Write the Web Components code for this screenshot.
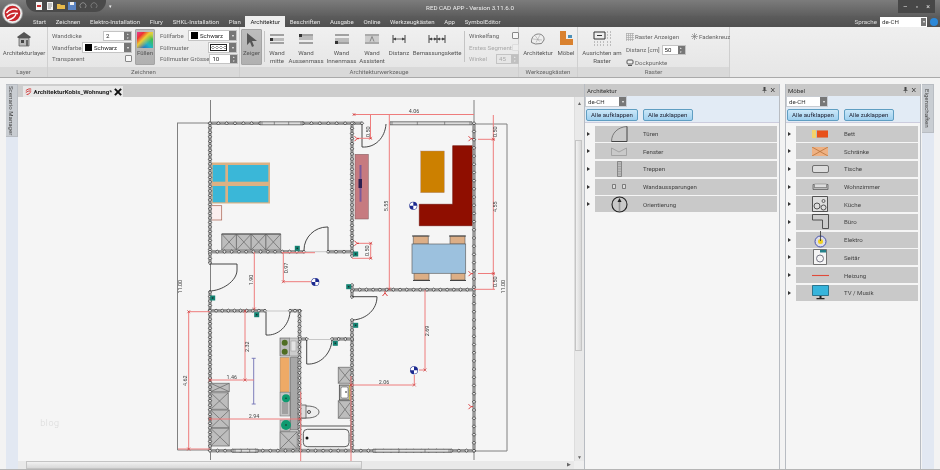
<!DOCTYPE html>
<html lang="de">
<head>
<meta charset="utf-8">
<title>RED CAD APP</title>
<style>
  html, body { margin: 0; width: 940px; height: 470px; overflow: hidden; background: #f3f3f3; }
  body { font: 6.1px Roboto, "Liberation Sans", sans-serif; color: #333; display: flex; flex-direction: column; filter: blur(.3px); }
  svg { display: block; }
</style>
</head>
<body>

<cad-titlebar title-text="RED CAD APP - Version 3.11.6.0"></cad-titlebar>
<cad-tabs active="Architektur" tabs="Start,Zeichnen,Elektro-Installation,Flury,SHKL-Installation,Plan,Architektur,Beschriften,Ausgabe,Online,Werkzeugkästen,App,SymbolEditor"></cad-tabs>

<cad-ribbon>
  <ribbon-group label="Layer" width="48">
    <ribbon-btn width="46" label="Architekturlayer">
      <svg width="16" height="16" viewBox="0 0 16 16"><path d="M1 6 8 1l7 5-1 1H2z" fill="#555"/><path d="M3 7h10v8H3z" fill="#bbb" stroke="#555" stroke-width=".7"/><path d="M5 9h3v3H5z" fill="#444"/><path d="M10 9h2v6h-2z" fill="#666"/></svg>
    </ribbon-btn>
  </ribbon-group>

  <ribbon-group label="Zeichnen" width="192">
    <form-col width="80">
      <form-line label="Wanddicke"><cad-spin value="2" width="29"></cad-spin></form-line>
      <form-line label="Wandfarbe"><cad-combo value="Schwarz" swatch="#000" width="50"></cad-combo></form-line>
      <form-line label="Transparent"><cad-check></cad-check></form-line>
    </form-col>
    <ribbon-btn width="20" label="Füllen" pressed style="margin-left:3px">
      <div style="width:16px;height:16px;background:linear-gradient(135deg,#e8379a 0%,#e33 22%,#ec3 42%,transparent 70%),linear-gradient(45deg,#2a3fc4,#1fb5c8 45%,#3fbf4a 75%,#e8e060)"></div>
    </ribbon-btn>
    <form-col width="77" style="margin-left:5px">
      <form-line label="Füllfarbe"><cad-combo value="Schwarz" swatch="#000" width="49"></cad-combo></form-line>
      <form-line label="Füllmuster"><cad-combo pattern width="29"></cad-combo></form-line>
      <form-line label="Füllmuster Grösse"><cad-spin value="10" width="29"></cad-spin></form-line>
    </form-col>
  </ribbon-group>

  <ribbon-group label="Architekturwerkzeuge" width="279">
    <ribbon-btn width="21" label="Zeiger" pressed>
      <svg width="14" height="16" viewBox="0 0 14 16"><path d="M2 1v12l3-3 2 5 2-1-2-5h5z" fill="#555"/></svg>
    </ribbon-btn>
    <ribbon-sep></ribbon-sep>
    <ribbon-btn width="24" label="Wand mitte">
      <svg width="16" height="12" viewBox="0 0 16 12"><path d="M1 2h14M1 10h14" stroke="#555" stroke-width="1.2"/><path d="M1 5h14v3H1z" fill="#bbb"/><path d="M1 5h3v3H1z" fill="#333"/></svg>
    </ribbon-btn>
    <ribbon-btn width="34" label="Wand Aussenmass">
      <svg width="16" height="12" viewBox="0 0 16 12"><path d="M1 2h14M1 10h14" stroke="#555" stroke-width="1.2"/><path d="M1 3h14v4H1z" fill="#bbb"/><path d="M1 1h3v3H1z" fill="#333"/></svg>
    </ribbon-btn>
    <ribbon-btn width="37" label="Wand Innenmass">
      <svg width="16" height="12" viewBox="0 0 16 12"><path d="M1 2h14M1 10h14" stroke="#555" stroke-width="1.2"/><path d="M1 5h14v4H1z" fill="#bbb"/><path d="M1 8h3v3H1z" fill="#333"/></svg>
    </ribbon-btn>
    <ribbon-btn width="24" label="Wand Assistent">
      <svg width="16" height="12" viewBox="0 0 16 12"><path d="M1 2h14M1 10h14" stroke="#666" stroke-width="1.2"/><path d="M1 3h14v6H1z" fill="#ccc"/><path d="M6 8.5 8 3.500l2 5" fill="none" stroke="#777" stroke-width=".8"/></svg>
    </ribbon-btn>
    <ribbon-btn width="30" label="Distanz">
      <svg width="16" height="12" viewBox="0 0 16 12"><path d="M2 2v8M14 2v8" stroke="#444"/><path d="M2 6h12" stroke="#444" stroke-width=".8"/><path d="M2 6l3-1.500v3zM14 6l-3-1.500v3z" fill="#444"/></svg>
    </ribbon-btn>
    <ribbon-btn width="46" label="Bemassungskette">
      <svg width="18" height="12" viewBox="0 0 18 12"><path d="M1 2v8M9 2v8M17 2v8" stroke="#444"/><path d="M1 6h16" stroke="#444" stroke-width=".8"/><path d="M1 6l3-1.500v3zM9 6l-3-1.500v3zM9 6l3-1.500v3zM17 6l-3-1.500v3z" fill="#444"/></svg>
    </ribbon-btn>
    <ribbon-sep style="margin-left:4px"></ribbon-sep>
    <form-col width="50" style="margin-left:4px">
      <form-line label="Winkelfang"><cad-check></cad-check></form-line>
      <form-line label="Erstes Segment" disabled><cad-check disabled></cad-check></form-line>
      <form-line label="Winkel" disabled><cad-spin value="45" width="23" disabled></cad-spin></form-line>
    </form-col>
  </ribbon-group>

  <ribbon-group label="Werkzeugkästen" width="59">
    <ribbon-btn width="36" label="Architektur">
      <svg width="16" height="12" viewBox="0 0 16 12"><path d="M1.500 9.500C1 5 4 1 8.500 1c3.500 0 6 2.500 5.500 6l-2.500 3.500-6 .5z" fill="#eee" stroke="#666" stroke-width=".8"/><path d="M5 2.500l4.500 6M10 2 6 9.500M3 6l9 1" stroke="#999" stroke-width=".5"/></svg>
    </ribbon-btn>
    <ribbon-btn width="20" label="Möbel">
      <svg width="15" height="15" viewBox="0 0 15 15"><path d="M1 0h6v8h7v6H1z" fill="#d9812f"/><path d="M9 4h4v3H9z" fill="#4a8fb8"/></svg>
    </ribbon-btn>
  </ribbon-group>

  <ribbon-group label="Raster" width="152">
    <ribbon-btn width="46" label="Ausrichten am Raster">
      <svg width="18" height="15" viewBox="0 0 18 15"><path d="M1 1h11v7H1z" fill="#eee" stroke="#333"/><path d="M4 4.500h5" stroke="#333"/><path d="M14 1h.8M17 1h.8M14 4h.8M17 4h.8M14 7h.8M17 7h.8M1 11h.8M4 11h.8M7 11h.8M10 11h.8M14 11h.8M17 11h.8M1 14h.8M4 14h.8M7 14h.8M10 14h.8M14 14h.8M17 14h.8" stroke="#777"/></svg>
    </ribbon-btn>
    <raster-opts></raster-opts>
  </ribbon-group>
</cad-ribbon>

<cad-workspace>
  <side-rail slot="left" label="Scenario Manager" tab-height="53"></side-rail>

  <cad-document slot="doc" name="ArchitekturKobis_Wohnung*">
    <floor-plan></floor-plan>
  </cad-document>

  <dock-panel slot="panels" label="Architektur" width="196" gutter="10">
    <panel-row label="Türen"><svg width="17" height="16" viewBox="0 0 17 16"><path d="M.5 15.500C.5 7 7 1 16 .5" fill="none" stroke="#666" stroke-width=".8"/><path d="M.5 15.500H16V.5" fill="none" stroke="#444" stroke-width="1"/></svg></panel-row>
    <panel-row label="Fenster"><svg width="16" height="9" viewBox="0 0 16 9"><path d="M.5 8.500h15M.5 8.500V1L8 5l7.500-4v7.500" fill="none" stroke="#999" stroke-width=".8"/></svg></panel-row>
    <panel-row label="Treppen"><svg width="5" height="16" viewBox="0 0 5 16"><path d="M.5.500h4v15h-4z" fill="#bbb" stroke="#777" stroke-width=".8"/><path d="M.5 3h4M.5 5.500h4M.5 8h4M.5 10.500h4M.5 13h4" stroke="#888" stroke-width=".5"/></svg></panel-row>
    <panel-row label="Wandaussparungen"><svg width="14" height="5" viewBox="0 0 14 5"><path d="M.5.500h3v4h-3zM10.500.500h3v4h-3z" fill="#ddd" stroke="#666" stroke-width=".8"/></svg></panel-row>
    <panel-row label="Orientierung"><svg width="17" height="17" viewBox="0 0 17 17"><circle cx="8.500" cy="8.500" r="7.500" fill="none" stroke="#222" stroke-width="1.100"/><path d="M8.500 2l2 4h-4z" fill="#222"/><path d="M7.700 6h1.600v9H7.700z" fill="#999"/></svg></panel-row>
  </dock-panel>

  <dock-panel slot="panels" label="Möbel" width="136" gutter="10">
    <panel-row label="Bett"><svg width="16" height="8" viewBox="0 0 16 8"><path d="M0 0h16v8H0z" fill="#bbb"/><path d="M0 0h4v8H0z" fill="#f3d36c"/><path d="M5 .500h11v7H5z" fill="#e8501a"/></svg></panel-row>
    <panel-row label="Schränke"><svg width="16" height="9" viewBox="0 0 16 9"><path d="M0 0h16v9H0z" fill="#eeb183"/><path d="M0 0l16 9M16 0 0 9" stroke="#b06a30" stroke-width=".7"/></svg></panel-row>
    <panel-row label="Tische"><svg width="17" height="8" viewBox="0 0 17 8"><rect x=".5" y=".5" width="16" height="7" rx="1.500" fill="#ddd" stroke="#555" stroke-width=".8"/></svg></panel-row>
    <panel-row label="Wohnzimmer"><svg width="17" height="7" viewBox="0 0 17 7"><path d="M1 1.500h1.500v3h12v-3H16v5H1z" fill="#bbb" stroke="#555" stroke-width=".7"/><path d="M2.500 1h12v3.500h-12z" fill="#ddd" stroke="#777" stroke-width=".5"/></svg></panel-row>
    <panel-row label="Küche"><svg width="16" height="16" viewBox="0 0 16 16"><path d="M.5.500h15v15H.5z" fill="#ddd" stroke="#444" stroke-width=".9"/><circle cx="5" cy="10" r="3" fill="none" stroke="#444" stroke-width=".9"/><circle cx="11.500" cy="11.500" r="2.500" fill="none" stroke="#444" stroke-width=".9"/><circle cx="11.500" cy="5" r="1.500" fill="none" stroke="#444" stroke-width=".8"/></svg></panel-row>
    <panel-row label="Büro"><svg width="17" height="15" viewBox="0 0 17 15"><path d="M.5.500h16v14h-6V6H.5z" fill="#ccc" stroke="#444" stroke-width=".9"/></svg></panel-row>
    <panel-row label="Elektro"><svg width="13" height="17" viewBox="0 0 13 17"><circle cx="6.500" cy="10.500" r="5.500" fill="#dcdce8" stroke="#4450aa"/><circle cx="6.500" cy="10.500" r="2.500" fill="#f0d020"/><path d="M6.500 0v10" stroke="#333" stroke-width=".8"/></svg></panel-row>
    <panel-row label="Seitär"><svg width="14" height="16" viewBox="0 0 14 16"><path d="M.5.500h13v15H.5z" fill="#f4f4f4" stroke="#555" stroke-width=".8"/><path d="M7 1h6v2.500H7z" fill="#23808a"/><circle cx="7" cy="9.500" r="3.500" fill="none" stroke="#667" stroke-width=".9"/></svg></panel-row>
    <panel-row label="Heizung"><svg width="17" height="3" viewBox="0 0 17 3"><path d="M0 1.500h17" stroke="#e04a3a" stroke-width="1.100"/></svg></panel-row>
    <panel-row label="TV / Musik"><svg width="17" height="15" viewBox="0 0 17 15"><path d="M.5.500h16v10H.5z" fill="#36b4dc" stroke="#17627c" stroke-width=".8"/><path d="M7.500 11h2v2h-2zM4.500 13h8v1.200h-8z" fill="#222"/></svg></panel-row>
  </dock-panel>

  <side-rail slot="right" label="Eigenschaften" tab-height="49"></side-rail>
</cad-workspace>

<script>
// small helper, every element is the same: shadow root + innerHTML
class Base extends HTMLElement {
  connectedCallback() {
    if (!this.shadowRoot) this.attachShadow({mode: 'open'}).innerHTML = this.render();
    if (this.afterRender) this.afterRender();
  }
  attr(name, fallback) {
    return this.hasAttribute(name) ? this.getAttribute(name) : fallback;
  }
}

class CadTitlebar extends Base {
  render() {
    const qat = [
      '<path d="M1 0h6v8H1z" fill="#f4f4f4"/><path d="M2 3h4v2H2z" fill="#c33"/>',
      '<path d="M1 0h6v8H1z" fill="#f4f4f4"/><path d="M2 2h4M2 4h4M2 6h3" stroke="#666" stroke-width=".7"/>',
      '<path d="M0 2h3l1 1h4v4H0z" fill="#e7b94a"/>',
      '<path d="M0 0h8v8H0z" fill="#5a83c2"/><path d="M2 0h4v3H2z" fill="#eee"/>',
      '<path d="M2 6a3 3 0 1 1 4 0" fill="none" stroke="#888"/>',
      '<path d="M2 6a3 3 0 1 1 4 0" fill="none" stroke="#777"/>'
    ].map(p => `<svg width="8" height="8" viewBox="0 0 8 8">${p}</svg>`).join('');
    return `<style>
      :host { display: grid; grid-template-columns: 1fr auto 1fr; align-items: start; height: 16px; flex: none; position: relative;
        background: linear-gradient(#7c7c7c, #5e5e5e); color: #eee; font-size: 6.2px; }
      .logo { position: absolute; left: 2px; top: 3px; width: 21px; height: 21px; z-index: 2; }
      .left { display: flex; align-items: flex-start; }
      .qat { display: flex; gap: 3px; align-items: center; height: 12px; width: 80px; margin-left: 26px; padding-left: 9px;
        box-sizing: border-box; background: #4a4a4a; border-radius: 0 0 11px 11px; }
      .more { margin-left: 3px; align-self: center; color: #eee; font-size: 5px; width: 8px; line-height: 12px; }
      .title { line-height: 16px; white-space: nowrap; }
      .win { display: flex; gap: 8px; justify-self: end; justify-content: center; align-items: center; width: 37px; height: 13px; margin-right: 5px;
        background: #474747; color: #ddd; font-size: 7px; }
    </style>
    <svg class="logo" viewBox="0 0 21 21"><circle cx="10.500" cy="10.500" r="10" fill="#eee" stroke="#999" stroke-width=".8"/><circle cx="10.500" cy="10.500" r="7.800" fill="#c8272d"/><path d="M4.500 10c3-4 8-5 11-3M5 13.500c3-3 7-4 11-3M6 17c4-1 7-2 8-6" fill="none" stroke="#fff" stroke-width="1.300"/></svg>
    <div class="left"><div class="qat">${qat}</div><span class="more">▾</span></div>
    <div class="title">${this.attr('title-text')}</div>
    <div class="win"><span>–</span><span>▫</span><span>×</span></div>`;
  }
}

class CadTabs extends Base {
  render() {
    const active = this.attr('active');
    const items = this.attr('tabs').split(',').map(t =>
      `<span class="${t === active ? 'on' : ''}">${t}</span>`).join('');
    return `<style>
      :host { display: flex; height: 11px; flex: none; background: linear-gradient(#5c5c5c, #505050); color: #e6e6e6; align-items: flex-end; }
      nav { display: flex; gap: 9.700px; padding-left: 33px; flex: 1; line-height: 11px; font-size: 6.050px; }
      .on { background: #eee; color: #222; padding: 0 5px; margin: 0 -5px; height: 11px; line-height: 12px; }
      .lang { display: flex; align-items: center; height: 11px; color: #ddd; font-size: 6.2px; margin-right: 0; }
      .lang i { font-style: normal; margin-right: 3px; }
      .box { display: flex; width: 47px; height: 10px; background: #fff; color: #333; line-height: 10px; padding-left: 2px; box-sizing: border-box; justify-content: space-between; }
      .box b { width: 5px; height: 8px; margin: 1px; background: #777; color: #eee; font: 4px/8px sans-serif; text-align: center; }
      .help { width: 8px; height: 8px; border-radius: 50%; margin: 0 2px 0 3px; background: #2b88d8; }
    </style>
    <nav>${items}</nav>
    <div class="lang"><i>Sprache</i><div class="box"><span>de-CH</span><b>▾</b></div><span class="help"></span></div>`;
  }
}

class CadRibbon extends Base {
  render() {
    return `<style>
      :host { display: flex; height: 51px; flex: none; background: linear-gradient(#f0f0f0, #e4e4e4);
        border-bottom: 1px solid #aaa; box-sizing: border-box; position: relative; }
      .rest { flex: 1; background: linear-gradient(#efefef, #e6e6e6); }
    </style><slot></slot><div class="rest"></div>`;
  }
}

class RibbonGroup extends Base {
  render() {
    return `<style>
      :host { display: flex; flex-direction: column; flex: none; width: ${this.attr('width')}px; box-sizing: border-box;
        border-right: 1px solid #cfcfcf; }
      .body { flex: 1; display: flex; align-items: stretch; gap: 0; padding: 2px 1px 2px 1px; min-height: 0; }
      .cap { height: 10px; line-height: 10px; background: #d9d9d9; text-align: center; color: #666; }
    </style><div class="body"><slot></slot></div><div class="cap">${this.attr('label')}</div>`;
  }
}

class RibbonBtn extends Base {
  render() {
    const pressed = this.hasAttribute('pressed');
    return `<style>
      :host { display: flex; flex-direction: column; align-items: center; flex: none; width: ${this.attr('width')}px;
        box-sizing: border-box; text-align: center; color: #555; line-height: 8px; padding-top: 1px;
        ${pressed ? 'background:linear-gradient(#bdbdbd,#b0b0b0);border:1px solid #a4a4a4;border-radius:1px;' : ''} }
      .ico { height: 17px; display: flex; align-items: center; justify-content: center; flex: none; margin-bottom: ${pressed ? 1 : 2}px; }
    </style><div class="ico"><slot></slot></div><div>${this.attr('label')}</div>`;
  }
}

class RibbonSep extends Base {
  render() {
    return `<style>:host { display: block; flex: none; width: 1px; margin: 2px 0 3px 2px; background: #c4c4c4; }</style>`;
  }
}

class FormCol extends Base {
  render() {
    return `<style>:host { display: flex; flex-direction: column; justify-content: space-between; flex: none;
      width: ${this.attr('width')}px; margin-left: 3px; padding: 1px 0; box-sizing: border-box; }</style><slot></slot>`;
  }
}

class FormLine extends Base {
  render() {
    const off = this.hasAttribute('disabled');
    return `<style>:host { display: flex; align-items: center; justify-content: space-between; height: 11px;
      color: ${off ? '#aaa' : '#666'}; white-space: nowrap; }</style><span>${this.attr('label')}</span><slot></slot>`;
  }
}

class CadSpin extends Base {
  render() {
    const off = this.hasAttribute('disabled');
    return `<style>
      :host { display: flex; flex: none; height: 10px; width: ${this.attr('width')}px; box-sizing: border-box;
        background: ${off ? '#e6e6e6' : '#fff'}; border: 1px solid #c4c4c4; color: ${off ? '#aaa' : '#222'}; line-height: 8px; justify-content: space-between; }
      span { padding-left: 2px; }
      b { width: 7px; background: ${off ? '#c0c0c0' : '#777'}; color: #eee; font: 3px/4px sans-serif; text-align: center; }
    </style><span>${this.attr('value')}</span><b>▴<br>▾</b>`;
  }
}

class CadCombo extends Base {
  render() {
    const sw = this.attr('swatch');
    const inner = this.hasAttribute('pattern')
      ? `<i class="pat"></i>`
      : `<i class="sw" style="background:${sw}"></i><span>${this.attr('value')}</span>`;
    return `<style>
      :host { display: flex; flex: none; height: 11px; width: ${this.attr('width')}px; box-sizing: border-box; align-items: center;
        background: #fff; border: 1px solid #c4c4c4; color: #222; }
      .sw { width: 7px; height: 7px; margin: 0 2px 0 2px; flex: none; }
      .pat { flex: 1; height: 5px; margin: 0 1px; border: 1px solid #222;
        background: radial-gradient(circle at 2px 2.500px, #fff 1px, #555 1.200px, #fff 1.800px) 0 0 / 4px 5px; }
      span { flex: 1; }
      b { width: 7px; height: 9px; background: #777; color: #eee; font: 4px/9px sans-serif; text-align: center; flex: none; margin-left: 1px; }
    </style>${inner}<b>▾</b>`;
  }
}

class CadCheck extends Base {
  render() {
    const off = this.hasAttribute('disabled');
    return `<style>:host { display: block; flex: none; width: 7px; height: 7px; box-sizing: border-box; background: ${off ? '#eee' : '#f7f7f7'};
      border: 1px solid ${off ? '#ddd' : '#888'}; border-radius: 1px; }</style>`;
  }
}

class RasterOpts extends Base {
  render() {
    return `<style>
      :host { display: grid; grid-template-columns: 65px 38px; grid-auto-rows: 13px; align-content: start; align-items: center; padding-left: 1px; margin-top: 1px; color: #666; white-space: nowrap; }
      div { display: flex; align-items: center; gap: 1px; }
      .s { display: flex; justify-content: space-between; width: 24px; height: 10px; margin-left: 1px; box-sizing: border-box; background: #fff; border: 1px solid #c4c4c4; color: #222; line-height: 8px; padding-left: 2px; }
      .s b { width: 7px; background: #777; color: #eee; font: 3px/4px sans-serif; text-align: center; }
      svg { flex: none; }
    </style>
    <div><svg width="8" height="8" viewBox="0 0 8 8"><path d="M.5 0v8M2.500 0v8M4.500 0v8M6.500 0v8M0 .5h8M0 2.500h8M0 4.500h8M0 6.500h8" stroke="#aaa" stroke-width=".7"/></svg>Raster Anzeigen</div>
    <div><svg width="7" height="7" viewBox="0 0 7 7"><path d="M3.500 0v7M0 3.500h7M1 1l5 5M6 1 1 6" stroke="#777" stroke-width=".6"/></svg>Fadenkreuz</div>
    <div>Distanz [cm]<span class="s">50<b>▴<br>▾</b></span></div><div></div>
    <div><svg width="8" height="7" viewBox="0 0 8 7"><rect x="1" y="1" width="6" height="4" rx="1" fill="#eee" stroke="#555"/><path d="M2 6.500h4" stroke="#555"/></svg>Dockpunkte</div><div></div>`;
  }
}

class CadWorkspace extends Base {
  render() {
    return `<style>
      :host { flex: 1; display: flex; min-height: 0; padding-top: 6px; box-sizing: border-box; background: #f3f3f3; border-bottom: 1px solid #b5b5b5; }
      .doc { display: flex; flex: none; width: 566px; }
      .panels { display: flex; gap: 5px; margin-left: 0; flex: none; }
    </style>
    <slot name="left"></slot>
    <div class="doc"><slot name="doc"></slot></div>
    <div class="panels"><slot name="panels"></slot></div>
    <slot name="right"></slot>`;
  }
}

class SideRail extends Base {
  render() {
    const right = this.attr('slot') === 'right';
    return `<style>
      :host { display: block; flex: none; width: 12px; margin: ${right ? '0 0 0 1px' : '0 0 0 6px'}; background: #e2e8f2; }
      div { height: ${this.attr('tab-height')}px; background: #c9cdd2; writing-mode: vertical-rl; text-align: center;
        line-height: 11px; color: #444; box-sizing: border-box; border: 1px solid #b9bdc3; border-left: 0; }
    </style><div>${this.attr('label')}</div>`;
  }
}

class CadDocument extends Base {
  render() {
    return `<style>
      :host { display: flex; flex-direction: column; flex: 1; min-width: 0; background: #f5f5f5; }
      .strip { height: 13px; flex: none; background: #cdcdcd; display: flex; align-items: flex-end; }
      .tab { display: flex; align-items: center; gap: 1.500px; height: 11px; padding: 0 1px 0 2px; margin-left: 5px;
        background: #e8e8e8; font-weight: 700; color: #222; font-size: 6.2px; white-space: nowrap; }
      .main { flex: 1; min-height: 0; display: grid; grid-template-columns: 1fr 10px; grid-template-rows: 1fr 8px; }
      .v, .h { background: #e9e9e9; position: relative; color: #666; font-size: 5px; }
      .v { border-left: 1px solid #ddd; }
      .v i { position: absolute; left: 0; right: 2px; top: 43px; height: 211px; background: linear-gradient(90deg, #f1f1f1, #d8d8d8); border: 1px solid #c4c4c4; box-sizing: border-box; }
      .v b { position: absolute; left: 2px; font-weight: 400; }
      .h i { position: absolute; left: 8px; width: 336px; top: 0; bottom: 0; background: linear-gradient(#f1f1f1, #d8d8d8); border: 1px solid #c4c4c4; box-sizing: border-box; }
      .h b { position: absolute; right: 3px; top: 0; font-weight: 400; }
      .corner { background: #efefef; }
    </style>
    <div class="strip"><div class="tab">
      <svg width="7" height="7" viewBox="0 0 9 8"><path d="M1 3c2-2 5-3 7-2M1 5.500c2-2 5-2.500 7-2M2 8c3-.5 4-1.500 5-3" fill="none" stroke="#d02a2a" stroke-width="1.200"/></svg>
      <span>${this.attr('name')}</span>
      <svg width="8" height="8" viewBox="0 0 9 9"><path d="M1 1l7 7M8 1 1 8" stroke="#111" stroke-width="2.200"/></svg>
    </div></div>
    <div class="main">
      <slot></slot>
      <div class="v"><b style="top:3px">▲</b><i></i><b style="bottom:1px">▼</b></div>
      <div class="h"><i></i><b>▶</b></div>
      <div class="corner"></div>
    </div>`;
  }
}

class DockPanel extends Base {
  render() {
    const g = this.attr('gutter');
    return `<style>
      :host { display: flex; flex-direction: column; flex: none; width: ${this.attr('width')}px; box-sizing: border-box;
        background: #f5f5f5; border-left: 1px solid #b8bcc2; border-right: 1px solid #b8bcc2; }
      .head { height: 12px; flex: none; background: #c9c9c9; display: flex; align-items: center; justify-content: space-between; padding: 0 3px 0 2px; color: #333; }
      .tools { height: 27px; flex: none; background: #e2ebf5; box-sizing: border-box; border-bottom: 1px solid #ccd; }
      .lang { display: flex; width: 42px; height: 11px; box-sizing: border-box; background: #fff; border: 1px solid #c8ccd2; line-height: 9px; padding-left: 2px; justify-content: space-between; color: #333; }
      .lang b { width: 7px; background: #777; color: #eee; font: 4px/9px sans-serif; text-align: center; }
      .btns { display: flex; gap: 4.700px; padding: 2px 0 0 1px; }
      .btns div { height: 12px; line-height: 10px; text-align: center; box-sizing: border-box; border: 1px solid #5f9ec2; border-radius: 2px;
        background: linear-gradient(#cbe7f8, #9fd0ef); color: #223; }
      .list { flex: 1; display: flex; flex-direction: column; gap: 1.700px; padding: 2.500px 2px 0 ${g}px; }
    </style>
    <div class="head">${this.attr('label')}<svg width="14" height="6" viewBox="0 0 14 6"><path d="M1.500 0h2v3h1v.8h-1.500V6H2.500V3.800H.5V3h1z" fill="#444"/><path d="M9 1l3.500 4M12.500 1 9 5" stroke="#444" stroke-width=".9"/></svg></div>
    <div class="tools">
      <div class="lang">de-CH<b>▾</b></div>
      <div class="btns"><div style="width:52px">Alle aufklappen</div><div style="width:50px">Alle zuklappen</div></div>
    </div>
    <div class="list"><slot></slot></div>`;
  }
}

class PanelRow extends Base {
  render() {
    return `<style>
      :host { display: flex; align-items: center; height: 16px; background: #c9c9c9; color: #444; position: relative; }
      .ico { width: 48px; flex: none; display: flex; justify-content: center; align-items: center; height: 16px; overflow: visible; }
      i { position: absolute; left: -8px; top: 6px; width: 0; height: 0; border-left: 3px solid #333; border-top: 2px solid transparent; border-bottom: 2px solid transparent; }
    </style><i></i><div class="ico"><slot></slot></div><span>${this.attr('label')}</span>`;
  }
}

class FloorPlan extends Base {
  render() {
    return `<style>
      :host { display: block; min-width: 0; min-height: 0; overflow: hidden; }
      svg { display: block; width: 555px; height: 364px; font: 5.4px Roboto, sans-serif; }
      text { fill: #444; text-anchor: middle; dominant-baseline: middle; }
      .blog { fill: #dadada; font-size: 9px; font-weight: 300; letter-spacing: .6px; }
    </style>
    <svg viewBox="18 97 555 364">${this.plan()}<text class="blog" x="50" y="424">blog</text></svg>`;
  }

  // wall = grey band + row of small diamonds
  wall(x1, y1, x2, y2, step) {
    const len = Math.hypot(x2 - x1, y2 - y1), n = Math.floor(len / step);
    let s = `<line x1="${x1}" y1="${y1}" x2="${x2}" y2="${y2}" stroke="#999" stroke-width="3.500"/>`;
    for (let i = 0; i <= n; i++) {
      const x = x1 + (x2 - x1) * i / n, y = y1 + (y2 - y1) * i / n;
      s += `<path d="M${x - 1.7} ${y}L${x} ${y - 1.7}L${x + 1.7} ${y}L${x} ${y + 1.7}Z" fill="#ddd" stroke="#2c2c2c" stroke-width=".7"/>`;
    }
    return s;
  }
  win(x1, y, x2) {
    return `<path d="M${x1} ${y - 1.500}H${x2}V${y + 1.500}H${x1}Z" fill="#ddd" stroke="#444" stroke-width=".7"/>
      <path d="M${x1 + 2} ${y - 1.500}v3M${x2 - 2} ${y - 1.500}v3M${(x1 * 2 + x2) / 3} ${y - 1.500}v3M${(x1 + x2 * 2) / 3} ${y - 1.500}v3" stroke="#555" stroke-width=".6"/>`;
  }
  crossBox(x, y, w, h) {
    return `<path d="M${x} ${y}h${w}v${h}h${-w}z M${x} ${y}l${w} ${h} M${x + w} ${y}l${-w} ${h}" fill="#bdbdbd" stroke="#666" stroke-width=".7"/>`;
  }
  dim(d) { return `<path d="${d}" fill="none" stroke="#ee7c7c" stroke-width="1"/>`; }
  label(x, y, t, rot) {
    return `<text x="${x}" y="${y}"${rot ? ` transform="rotate(-90 ${x} ${y})"` : ''}>${t}</text>`;
  }
  teal(x, y) { return `<rect x="${x - 2.500}" y="${y - 2.500}" width="5" height="5" fill="#128272"/><circle cx="${x}" cy="${y}" r=".8" fill="#222"/>`; }
  spot(x, y) {
    return `<circle cx="${x}" cy="${y}" r="4" fill="#1c2a90"/><path d="M${x} ${y}h3.500a3.500 3.500 0 0 1-3.500 3.500zM${x} ${y}h-3.500a3.500 3.500 0 0 1 3.500-3.500z" fill="#fff"/>`;
  }
  mark(x, y, flip) {
    const f = flip ? -1 : 1;
    return `<path d="M${x - 2.500} ${y - 2.500 * f}L${x} ${y}L${x - 2.500} ${y + 2.500 * f}M${x} ${y}h2" fill="none" stroke="#d82a2a" stroke-width=".9"/>`;
  }

  plan() {
    let s = '';
    // grey axis lines
    s += `<path d="M177.500 123V450H209M177 123H210M210.500 100V460M474 100V460M474 124H507V451H474" fill="none" stroke="#808080" stroke-width="1"/>`;

    // furniture upper rooms
    s += `<rect x="211.500" y="162.500" width="58.500" height="41" fill="#dcb184"/>`;
    [[212.700, 165, 12.600, 16.700], [228, 165, 40.300, 16.700], [212.700, 186, 12.600, 16.300], [228, 186, 40.300, 16.300]]
      .forEach(r => { s += `<rect x="${r[0]}" y="${r[1]}" width="${r[2]}" height="${r[3]}" fill="#3ab7d8"/>`; });
    s += `<rect x="210.700" y="205.700" width="11" height="14.300" fill="#fbeeee" stroke="#a8604e" stroke-width=".7"/>`;
    for (let i = 0; i < 4; i++) s += this.crossBox(221.700 + i * 14.750, 234, 14.750, 16);
    s += `<path d="M221.700 234h59" stroke="#555"/>`;
    s += `<rect x="355" y="154.300" width="13.300" height="64.700" fill="#c67b80" stroke="#7a5a5a" stroke-width=".5"/>
      <rect x="359.500" y="165" width="2" height="36.700" fill="#7a5a9a"/><rect x="358.500" y="179" width="3.500" height="9" fill="#2a2050"/>`;
    s += `<rect x="420.700" y="151" width="23.600" height="41.700" fill="#cc8000" stroke="#a88" stroke-width=".4"/>`;
    s += `<path d="M452.700 145.700H474.300V225.700H419.300V204.300H452.700Z" fill="#8f0e00" stroke="#6d0a00" stroke-width=".6"/>`;
    s += `<path d="M413.300 236h15v8h-15zM450 236h15v8h-15zM414 273h15v7h-15zM451 273h14v7h-14z" fill="#dcae86" stroke="#555" stroke-width=".6"/>
      <path d="M412 236h17.500M449 236h17M413 280.500h17M450 280.500h16" stroke="#444" stroke-width="1.100"/>`;
    s += `<rect x="412" y="244" width="53.700" height="29.300" fill="#9cc1de" stroke="#666" stroke-width=".7"/>`;

    // furniture lower rooms
    [[210.700, 383.300, 18.600, 8.400], [210.700, 392.700, 17.600, 16.600], [210.700, 410, 18.600, 17.700], [210.700, 428.300, 18.600, 17.700],
     [280, 431.700, 17.300, 17.300], [338.300, 367.300, 13.400, 16], [338.300, 400.700, 13.400, 17.600]]
      .forEach(r => { s += this.crossBox(r[0], r[1], r[2], r[3]); });
    s += `<rect x="280" y="338" width="9.300" height="18" fill="#bbb" stroke="#555" stroke-width=".6"/>
      <circle cx="284.700" cy="342.700" r="3" fill="#4f6d22"/><circle cx="284.700" cy="351.700" r="3" fill="#4f6d22"/>
      <rect x="289.300" y="338" width="9" height="18" fill="#ccc" stroke="#777" stroke-width=".5"/>
      <rect x="291" y="341" width="5" height="10" fill="#e4e4e4" stroke="#888" stroke-width=".4"/>
      <rect x="280" y="357.300" width="9.300" height="34.700" fill="#eeaa66" stroke="#777" stroke-width=".4"/>
      <rect x="290.700" y="357" width="6.600" height="73" fill="#a8a8a8" stroke="#555" stroke-width=".6"/>
      <rect x="280" y="392.700" width="10" height="23.300" fill="#c4c4c4" stroke="#666" stroke-width=".5"/>
      <path d="M282 402h6v12h-6z" fill="#a0a0a0"/>
      <circle cx="286" cy="398.300" r="4" fill="#0e9a70"/>
      <rect x="280" y="420" width="10" height="11" fill="#c4c4c4" stroke="#666" stroke-width=".5"/>
      <circle cx="286" cy="425" r="5" fill="#0e9a70"/><circle cx="286" cy="425" r=".8" fill="#222"/><circle cx="286" cy="398.300" r=".7" fill="#222"/>`;
    s += `<path d="M300 406h7c8 0 12 3 12 6s-4 6-12 6h-7z" fill="#eee" stroke="#444" stroke-width=".8"/><rect x="300" y="405" width="6" height="13" fill="#ddd" stroke="#444" stroke-width=".7"/><circle cx="309" cy="412" r="1.500" fill="none" stroke="#222" stroke-width=".8"/>`;
    s += `<rect x="300" y="426" width="50.700" height="23.300" fill="#f5f5f5" stroke="#333" stroke-width=".8"/>
      <rect x="303.300" y="429.300" width="45.700" height="17.400" rx="4" fill="#f5f5f5" stroke="#333" stroke-width=".8"/><circle cx="307" cy="438" r="1.500" fill="#111"/>`;
    s += `<rect x="339.300" y="385" width="10" height="15" fill="#bbb" stroke="#333" stroke-width=".7"/><rect x="341" y="387" width="7" height="11" rx="1.500" fill="#fff" stroke="#444" stroke-width=".5"/><circle cx="346" cy="392" r=".8" fill="#111"/>
      <rect x="349.300" y="385" width="2.400" height="15" fill="#e8d648"/>`;
    s += `<path d="M253.700 358.300V404M251.700 358.300h4M251.700 404h4" stroke="#7070b4" stroke-width=".9" fill="none"/>`;

    // walls
    s += this.wall(210, 123.300, 260, 123.300, 8) + this.wall(303, 123.300, 362, 123.300, 8);
    s += this.wall(210, 123.300, 210, 263, 4.500) + this.wall(210, 292, 210, 450.500, 4.500);
    s += this.wall(210, 251.700, 304, 251.700, 7) + this.wall(328, 251.700, 352, 251.700, 7);
    s += this.wall(352, 123.300, 352, 256, 5) + this.wall(474, 123.300, 474, 451, 8);
    s += this.wall(353, 289.700, 474, 289.700, 6.500) + this.wall(352, 285, 352, 297, 6) + this.wall(352, 320, 352, 450.500, 5);
    s += this.wall(210, 310.700, 265, 310.700, 6) + this.wall(290, 310.700, 300, 310.700, 5);
    s += this.wall(299.500, 311, 299.500, 450, 5) + this.wall(300, 339, 306.700, 339, 6) + this.wall(332, 339, 352, 339, 6);
    s += this.wall(210, 450.700, 474, 450.700, 7.500);
    s += this.win(260, 123.300, 303) + this.win(390, 123.300, 472) + this.win(233, 450.700, 258) + this.win(373, 450.700, 451);

    // doors
    s += `<g fill="none" stroke="#333" stroke-width=".9">
      <path d="M304 250C304 237 315 227 327 227H328V251"/>
      <path d="M362 125V147C375 148 385 138 386 124"/>
      <path d="M210 264H237V270C237 281 222 291 209 291"/>
      <path d="M352 296.700H377C377 309 367 319 353 320"/>
      <path d="M266 312V335C278 336 289 326 290 312"/>
      <path d="M306.700 340V364C320 365 331 354 332 340"/>
    </g>
    <path d="M304 251.700H328M265 311H290M306.700 339.500H332" stroke="#bbb" stroke-width=".8"/>`;

    // dimensions
    s += this.dim('M353 114.500H474M389.300 114.500V123M389.300 123V289M370.500 115V138.300M357 138.300H372M370.700 243V258.300M357 243.300H372M352 258.300H372');
    s += this.dim('M254.300 252V309M283.300 252V281.700H311M281.700 252.700H315');
    s += this.dim('M493.300 115V289.300M478 139.300H495M478 273.500H495M474 289.300H495');
    s += this.dim('M188.700 311.700V449M188 311.700H210M178 449H210M245 311V380M210 380H254M210 419H300');
    s += this.dim('M300.700 391.700V461.700M351 376V461M352 385H414.300V375M425 290V370H419');
    [[354, 114.500], [370.500, 138.300], [370.700, 243.300], [370.700, 258.300], [389.300, 289], [493.300, 139.300], [493.300, 273.500], [245, 311], [245, 380], [188.700, 311.700], [188.700, 449], [414.300, 385], [425, 370], [283.300, 281.700], [254.300, 309], [210, 380], [210, 419], [300, 419], [351, 385]]
      .forEach(p => { s += `<path d="M${p[0] - 1.500} ${p[1] - 1.500}l3 3M${p[0] + 1.500} ${p[1] - 1.500}l-3 3" stroke="#c83030" stroke-width=".6"/>`; });
    s += this.mark(357, 138.700) + this.mark(357, 243.300) + this.mark(471, 138.700) + this.mark(471, 273.700) + this.mark(471, 406.700);
    s += `<path d="M382.500 296L385 293L387.500 296M385 293v-2" fill="none" stroke="#d82a2a" stroke-width=".9"/>`;

    s += [this.label(414, 112, '4.06'), this.label(386.700, 206, '5.55', 1), this.label(369, 131.700, '0.50', 1), this.label(367.300, 250.700, '0.50', 1),
      this.label(251.700, 280, '1.90', 1), this.label(286.700, 268, '0.97', 1), this.label(496, 131.700, '0.50', 1), this.label(496, 206.700, '4.55', 1),
      this.label(495.700, 281.700, '0.50', 1), this.label(504, 286.700, '11.00', 1), this.label(180.700, 286.700, '11.00', 1), this.label(186, 380.700, '4.62', 1),
      this.label(247.700, 346.700, '2.32', 1), this.label(231.700, 378, '1.46'), this.label(254, 416.700, '2.94'), this.label(384, 382.700, '2.06'), this.label(427.700, 331, '2.69', 1)].join('');

    [[297.300, 248.300], [355.700, 254], [212.700, 298], [256.700, 314.700], [348.700, 286.700], [355.700, 325.300], [335.300, 343.300]]
      .forEach(p => { s += this.teal(p[0], p[1]); });
    s += this.spot(413.300, 205.700) + this.spot(315.300, 282) + this.spot(414, 370.300);
    return s;
  }
}

customElements.define('cad-titlebar', CadTitlebar);
customElements.define('cad-tabs', CadTabs);
customElements.define('cad-ribbon', CadRibbon);
customElements.define('ribbon-group', RibbonGroup);
customElements.define('ribbon-btn', RibbonBtn);
customElements.define('ribbon-sep', RibbonSep);
customElements.define('form-col', FormCol);
customElements.define('form-line', FormLine);
customElements.define('cad-spin', CadSpin);
customElements.define('cad-combo', CadCombo);
customElements.define('cad-check', CadCheck);
customElements.define('raster-opts', RasterOpts);
customElements.define('cad-workspace', CadWorkspace);
customElements.define('side-rail', SideRail);
customElements.define('cad-document', CadDocument);
customElements.define('dock-panel', DockPanel);
customElements.define('panel-row', PanelRow);
customElements.define('floor-plan', FloorPlan);
</script>
</body>
</html>
